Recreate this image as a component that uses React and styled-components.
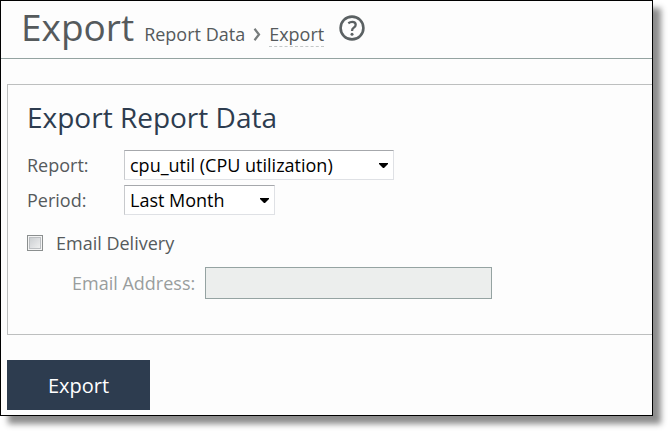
import React, { useState } from 'react'
import styled, { createGlobalStyle } from 'styled-components'

const GlobalStyle = createGlobalStyle`
  * {
    box-sizing: border-box;
  }
  body {
    margin: 0;
    background: #fff;
    color: #555a5c;
    font-family: "Open Sans", "Noto Sans", sans-serif;
    font-size: 18px;
    line-height: 24px;
  }
`;

const WindowStyle = styled.div`
  margin: 0 16px 16px 0;
  padding-bottom: 5px;
  border: 1px solid #000;
  background: #fdfdfd;
  box-shadow: 8px 8px 6px rgba(0, 0, 0, 0.45);
`;

const HeaderStyle = styled.header`
  display: flex;
  align-items: baseline;
  height: 58px;
  padding-left: 20px;
  border-bottom: 1px solid #94a3a1;
  h1 {
    margin: 0 10px 0 0;
    font-size: 37px;
    font-weight: 400;
    line-height: 52px;
  }
`;

const Breadcrumb = styled.nav`
  display: flex;
  align-items: baseline;
  svg {
    margin: 0 8px;
  }
`;

const CrumbLink = styled.a`
  color: inherit;
  text-decoration: none;
  border-bottom: ${(props) => (props.$current ? '1px dashed #c4c8c8' : 'none')};
`;

const HelpButton = styled.button`
  display: flex;
  align-self: flex-start;
  margin: 13px 0 0 14px;
  padding: 0;
  border: 0;
  background: none;
  color: #5b6163;
  cursor: pointer;
`;

const Panel = styled.section`
  margin: 25px 0 25px 6px;
  padding: 12px 19px 35px;
  border: 1px solid #bdbfbf;
  border-right: 0;
  h2 {
    margin: 0 0 13px;
    color: #2d3c4f;
    font-size: 28px;
    font-weight: 400;
    line-height: 40px;
  }
`;

const Row = styled.div`
  display: grid;
  grid-template-columns: 97px auto;
  justify-content: start;
  align-items: center;
  margin-bottom: 5px;
`;

const SelectWrap = styled.div`
  position: relative;
  width: ${(props) => props.$width};
  svg {
    position: absolute;
    top: 13px;
    right: 6px;
    pointer-events: none;
  }
`;

const Select = styled.select`
  display: block;
  appearance: none;
  width: 100%;
  height: 30px;
  padding: 0 20px 0 5px;
  border: 1px solid #dfe1e5;
  border-top-color: #a6a8ac;
  border-left-color: #c8cacd;
  border-radius: 0;
  background: #fff;
  color: #000;
  font: inherit;
`;

const CheckRow = styled.label`
  display: flex;
  align-items: center;
  gap: 13px;
  margin: 16px 0 12px;
`;

const Checkbox = styled.input`
  appearance: none;
  width: 16px;
  height: 16px;
  margin: 0;
  border: 1px solid #8b8f8f;
  background: linear-gradient(135deg, #c5c9cc, #f5f5f5);
  box-shadow: inset 0 0 0 1px #f4f4f4, inset 0 0 0 2px #bcbfc2;
  &:checked {
    background: #2d3c4f;
  }
`;

const EmailRow = styled.div`
  display: flex;
  align-items: center;
  gap: 10px;
  padding-left: 45px;
  color: ${(props) => (props.$disabled ? '#999d9d' : 'inherit')};
`;

const EmailInput = styled.input`
  width: 287px;
  height: 32px;
  padding: 0 6px;
  border: 1px solid #95a3a2;
  border-radius: 0;
  background: #fff;
  font: inherit;
  &:disabled {
    background: #eceeed;
  }
`;

const ExportButton = styled.button`
  display: block;
  height: 50px;
  margin-left: 6px;
  padding: 2px 41px 0;
  border: 0;
  background: #2d3c4f;
  color: #fff;
  font: inherit;
  font-size: 20px;
  cursor: pointer;
`;

function Chevron() {
    return (
        <svg width="8" height="13" viewBox="0 0 8 13" fill="none" aria-hidden="true">
            <path d="M1.5 0.8L6 6.5L1.5 12.2" stroke="#777c7c" strokeWidth="2.2" />
        </svg>
    )
}

function HelpIcon() {
    return (
        <svg width="28" height="28" viewBox="0 0 28 28" fill="none" stroke="currentColor" aria-hidden="true">
            <circle cx="14" cy="14" r="11.4" strokeWidth="2.6" />
            <path d="M10.3 9.2Q12.2 7.9 14.2 7.9Q17.7 7.9 17.7 10.7Q17.7 12.3 15.8 13.6Q14 14.8 14 17" strokeWidth="2.3" />
            <circle cx="14" cy="20.2" r="1.5" fill="currentColor" stroke="none" />
        </svg>
    )
}

function SelectField({ id, label, width, options }) {
    return (
        <Row>
            <label htmlFor={id}>{label}</label>
            <SelectWrap $width={width}>
                <Select id={id}>
                    {options.map((option) => (
                        <option key={option}>{option}</option>
                    ))}
                </Select>
                <svg width="9" height="5" viewBox="0 0 9 5" aria-hidden="true">
                    <path d="M0 0H9V1L5 5H4L0 1Z" fill="#000" />
                </svg>
            </SelectWrap>
        </Row>
    )
}

function App() {
    const [emailOn, setEmailOn] = useState(false)

    return (
        <>
            <GlobalStyle />
            <WindowStyle>
                <HeaderStyle>
                    <h1>Export</h1>
                    <Breadcrumb>
                        <CrumbLink href="#report-data">Report Data</CrumbLink>
                        <Chevron />
                        <CrumbLink href="#export" $current>Export</CrumbLink>
                    </Breadcrumb>
                    <HelpButton type="button" aria-label="Help">
                        <HelpIcon />
                    </HelpButton>
                </HeaderStyle>
                <Panel>
                    <h2>Export Report Data</h2>
                    <SelectField id="report" label="Report:" width="270px" options={['cpu_util (CPU utilization)']} />
                    <SelectField id="period" label="Period:" width="151px" options={['Last Month']} />
                    <CheckRow>
                        <Checkbox type="checkbox" checked={emailOn} onChange={(e) => setEmailOn(e.target.checked)} />
                        Email Delivery
                    </CheckRow>
                    <EmailRow $disabled={!emailOn}>
                        <label htmlFor="email">Email Address:</label>
                        <EmailInput id="email" type="email" disabled={!emailOn} />
                    </EmailRow>
                </Panel>
                <ExportButton type="button">Export</ExportButton>
            </WindowStyle>
        </>
    )
}

export default App
